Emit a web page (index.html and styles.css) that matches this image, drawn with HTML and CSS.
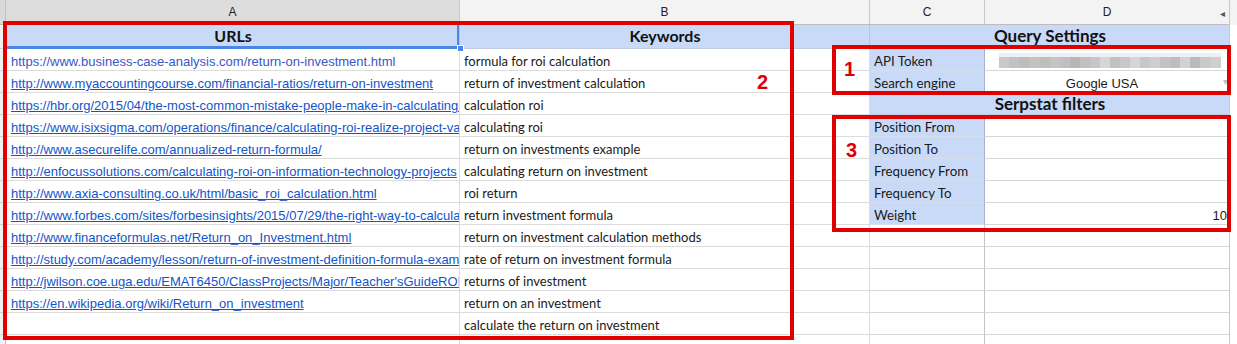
FILE: index.html
```html
<!DOCTYPE html>
<html>
<head>
<meta charset="utf-8">
<link rel="stylesheet" href="styles.css">
</head>
<body>
<div class="sheet">
  <!-- column headers -->
  <div class="c rh corner"></div>
  <div class="c ch sel">A</div>
  <div class="c ch">B</div>
  <div class="c ch">C</div>
  <div class="c ch last">D<span class="collapse">&#9666;</span></div>
  <div class="c ch rest"></div>

  <!-- row 1 -->
  <div class="c rh"></div>
  <div class="c hd r1 a1">URLs</div>
  <div class="c hd r1">Keywords</div>
  <div class="c hd r1 span2">Query Settings</div>
  <div class="c rest"></div>

  <!-- row 2 -->
  <div class="c rh"></div>
  <div class="c url plain">https://www.business-case-analysis.com/return-on-investment.html</div>
  <div class="c kw">formula for roi calculation</div>
  <div class="c lbl">API Token</div>
  <div class="c val"><div class="token"></div></div>
  <div class="c rest"></div>

  <!-- row 3 -->
  <div class="c rh"></div>
  <div class="c url">http://www.myaccountingcourse.com/financial-ratios/return-on-investment</div>
  <div class="c kw">return of investment calculation</div>
  <div class="c lbl">Search engine</div>
  <div class="c val drop">Google USA<span class="arrow">&#9662;</span></div>
  <div class="c rest"></div>

  <!-- row 4 -->
  <div class="c rh"></div>
  <div class="c url">https://hbr.org/2015/04/the-most-common-mistake-people-make-in-calculating-roi</div>
  <div class="c kw">calculation roi</div>
  <div class="c hd span2">Serpstat filters</div>
  <div class="c rest"></div>

  <!-- row 5 -->
  <div class="c rh"></div>
  <div class="c url">https://www.isixsigma.com/operations/finance/calculating-roi-realize-project-value/</div>
  <div class="c kw">calculating roi</div>
  <div class="c lbl">Position From</div>
  <div class="c val"></div>
  <div class="c rest"></div>

  <!-- row 6 -->
  <div class="c rh"></div>
  <div class="c url">http://www.asecurelife.com/annualized-return-formula/</div>
  <div class="c kw">return on investments example</div>
  <div class="c lbl">Position To</div>
  <div class="c val"></div>
  <div class="c rest"></div>

  <!-- row 7 -->
  <div class="c rh"></div>
  <div class="c url">http://enfocussolutions.com/calculating-roi-on-information-technology-projects</div>
  <div class="c kw">calculating return on investment</div>
  <div class="c lbl">Frequency From</div>
  <div class="c val"></div>
  <div class="c rest"></div>

  <!-- row 8 -->
  <div class="c rh"></div>
  <div class="c url">http://www.axia-consulting.co.uk/html/basic_roi_calculation.html</div>
  <div class="c kw">roi return</div>
  <div class="c lbl">Frequency To</div>
  <div class="c val"></div>
  <div class="c rest"></div>

  <!-- row 9 -->
  <div class="c rh"></div>
  <div class="c url">http://www.forbes.com/sites/forbesinsights/2015/07/29/the-right-way-to-calculate-roi</div>
  <div class="c kw">return investment formula</div>
  <div class="c lbl">Weight</div>
  <div class="c val num">10</div>
  <div class="c rest"></div>

  <!-- row 10 -->
  <div class="c rh"></div>
  <div class="c url">http://www.financeformulas.net/Return_on_Investment.html</div>
  <div class="c kw">return on investment calculation methods</div>
  <div class="c cc"></div>
  <div class="c cd"></div>
  <div class="c rest"></div>

  <!-- row 11 -->
  <div class="c rh"></div>
  <div class="c url">http://study.com/academy/lesson/return-of-investment-definition-formula-example.html</div>
  <div class="c kw">rate of return on investment formula</div>
  <div class="c cc"></div>
  <div class="c cd"></div>
  <div class="c rest"></div>

  <!-- row 12 -->
  <div class="c rh"></div>
  <div class="c url">http://jwilson.coe.uga.edu/EMAT6450/ClassProjects/Major/Teacher'sGuideROI.html</div>
  <div class="c kw">returns of investment</div>
  <div class="c cc"></div>
  <div class="c cd"></div>
  <div class="c rest"></div>

  <!-- row 13 -->
  <div class="c rh"></div>
  <div class="c url">https://en.wikipedia.org/wiki/Return_on_investment</div>
  <div class="c kw">return on an investment</div>
  <div class="c cc"></div>
  <div class="c cd"></div>
  <div class="c rest"></div>

  <!-- row 14 -->
  <div class="c rh"></div>
  <div class="c"></div>
  <div class="c kw">calculate the return on investment</div>
  <div class="c cc"></div>
  <div class="c cd"></div>
  <div class="c rest"></div>

  <!-- row 15 -->
  <div class="c rh"></div>
  <div class="c"></div>
  <div class="c"></div>
  <div class="c cc"></div>
  <div class="c cd"></div>
  <div class="c rest"></div>
</div>

<div class="handle"></div>

<div class="box box2"></div>
<div class="box box1"></div>
<div class="box box3"></div>
<div class="mark m1">1</div>
<div class="mark m2">2</div>
<div class="mark m3">3</div>
</body>
</html>
```

FILE: styles.css
```css
* { box-sizing: border-box; margin: 0; padding: 0; }

body {
  width: 1237px;
  height: 344px;
  overflow: hidden;
  background: #ffffff;
  position: relative;
  font-family: "Liberation Sans", Arial, sans-serif;
}

.sheet {
  display: grid;
  grid-template-columns: 6px 454px 410px 115px 245px 7px;
  grid-template-rows: 25px 24px;
  grid-auto-rows: 22px;
}

.c {
  border-right: 1px solid #dcdcdc;
  border-bottom: 1px solid #dcdcdc;
  overflow: hidden;
  white-space: nowrap;
  display: flex;
  align-items: flex-end;
  padding: 0 3px 0 4px;
  font-size: 13px;
  line-height: 17px;
  color: #1a1a1a;
  position: relative;
}

.rh {
  background: #f1f1f1;
  border-right: 1px solid #c0c0c0;
  border-bottom: 1px solid #d0d0d0;
  padding: 0;
}
.corner { background: #dadada; border-bottom-color: #bdbdbd; }

.ch {
  background: #f3f3f3;
  border-right: 1px solid #c8c8c8;
  border-bottom: 1px solid #bdbdbd;
  justify-content: center;
  align-items: center;
  padding: 0;
  font-size: 12px;
  color: #222;
}
.ch.sel { background: #dddddd; }
.ch.rest { border-right: none; }

.collapse {
  position: absolute;
  right: 4px;
  top: 5px;
  font-size: 10px;
  color: #555;
}

.hd {
  background: #c9daf8;
  justify-content: center;
  font-family: Lato, "Liberation Sans", sans-serif;
  font-weight: 700;
  font-size: 16px;
  line-height: 18px;
  color: #111;
  border-bottom-color: #c3cde0;
  border-right-color: #b9c4d8;
  padding-bottom: 1px;
}
.hd.r1 { padding-bottom: 3px; }
.span2 { grid-column: span 2; font-size: 17px; }

.a1 {
  box-shadow: inset -2px -2px 0 #4a86e8;
  border-bottom: 1px solid #4a86e8;
}

.url {
  color: #1155cc;
  text-decoration: underline;
  padding-left: 5px;
}
.url.plain {
  text-decoration: none;
  color: #3b55c8;
}

.kw {
  font-family: Lato, "Liberation Sans", sans-serif;
  font-size: 13px;
  color: #1a1a1a;
}

.lbl {
  background: #c9daf8;
  font-family: Lato, "Liberation Sans", sans-serif;
  font-size: 13.3px;
  color: #1a1a1a;
  border-right-color: #a9b4c8;
  border-bottom-color: #d6dded;
}

.val {
  border-right-color: #c8c8c8;
  border-bottom-color: #d6d6d6;
}
.drop { justify-content: center; padding-right: 14px; }
.num { justify-content: flex-end; padding-right: 2px; }

.arrow {
  position: absolute;
  right: 1px;
  top: 2px;
  font-size: 10px;
  color: #bdbdbd;
}

.token {
  width: 222px;
  height: 15px;
  margin: 0 auto 2px 10px;
  background:
    linear-gradient(#eef0f5, #eef0f5) top left / 100% 4px no-repeat,
    linear-gradient(to right,
      #c9c9c9 0 10px, #c2c2c2 10px 20px, #bdbdbd 20px 31px, #c6c2c0 31px 41px,
      #bcc0bb 41px 51px, #c4c4c4 51px 61px, #c2bfc2 61px 71px, #b9b6ba 71px 81px,
      #c1c0bb 81px 91px, #c8c4c8 91px 101px, #d6d6d6 101px 111px, #bfc2be 111px 121px,
      #c9c6c9 121px 131px, #d4d6dc 131px 141px, #c8c8c8 141px 151px, #cfcdcf 151px 161px,
      #c6c2c2 161px 171px, #bdbdbd 171px 181px, #d2d2d2 181px 191px, #bababa 191px 201px,
      #c9c9c9 201px 211px, #cfd0cd 211px 222px) bottom left / 100% 11px no-repeat;
}

.cc {
  border-right-color: #c4c4c4;
  border-bottom-color: #d6d6d6;
}
.cd {
  border-right-color: #c4c4c4;
  border-bottom-color: #d6d6d6;
}
.rest {
  border-right: none;
  border-bottom: none;
  border-left: 1px solid #c8c8c8;
  margin-left: -1px;
}

.handle {
  position: absolute;
  left: 457px;
  top: 45px;
  width: 7px;
  height: 7px;
  background: #4a86e8;
  border: 1px solid #ffffff;
}

.box {
  position: absolute;
  border: 4px solid #e00000;
}
.box2 { left: 3px; top: 21px; width: 791px; height: 319px; }
.box1 { left: 832px; top: 45px; width: 399px; height: 50px; }
.box3 { left: 832px; top: 115px; width: 399px; height: 117px; }

.mark {
  position: absolute;
  font-family: "Liberation Sans", Arial, sans-serif;
  font-weight: 700;
  font-size: 20px;
  line-height: 20px;
  color: #e00000;
}
.m1 { left: 844px; top: 59px; }
.m2 { left: 757px; top: 72px; }
.m3 { left: 846px; top: 140px; }
```
